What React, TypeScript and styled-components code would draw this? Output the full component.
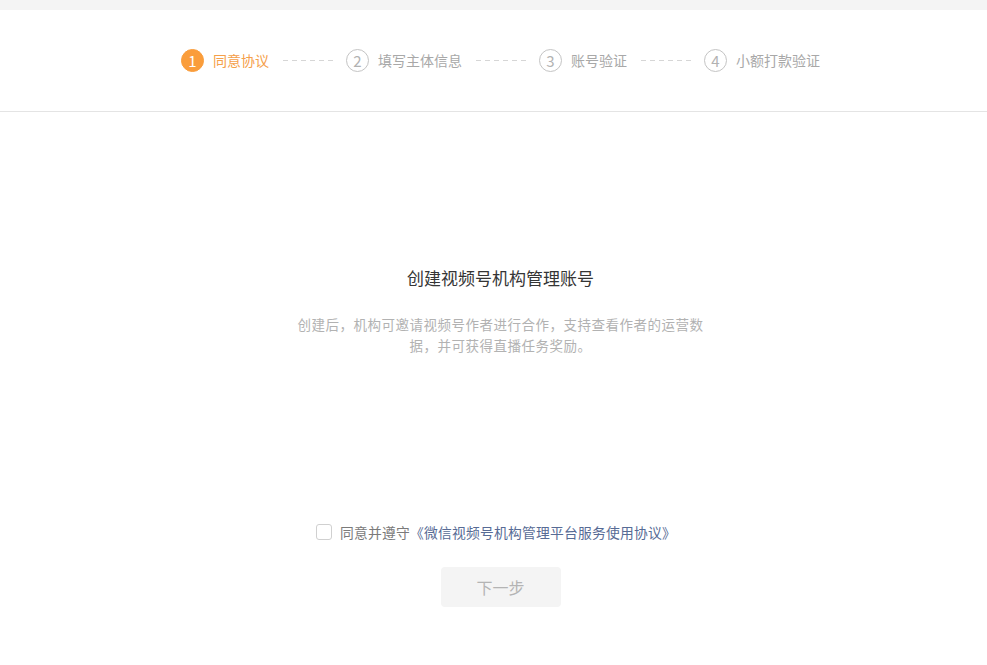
import React from "react";
import styled, { createGlobalStyle } from "styled-components";

const Global = createGlobalStyle`
  html, body { margin: 0; padding: 0; background: #fff; }
  body {
    font-family: "Noto Sans CJK SC", "Noto Sans", sans-serif;
  }
  * { box-sizing: border-box; }
`;

const TopStrip = styled.div`
  height: 10px;
  background: #f4f4f4;
`;

const Header = styled.header`
  height: 102px;
  border-bottom: 1px solid #e4e4e4;
  display: flex;
  align-items: center;
  justify-content: center;
  padding-left: 14px;
  padding-bottom: 1px;
`;

const Steps = styled.div`
  display: flex;
  align-items: center;
`;

const Step = styled.div`
  display: flex;
  align-items: center;
  gap: 9px;
`;

const Circle = styled.span<{ $active?: boolean }>`
  width: 23px;
  height: 23px;
  border-radius: 50%;
  display: flex;
  align-items: center;
  justify-content: center;
  font-size: 15px;
  line-height: 1;
  background: ${(p) => (p.$active ? "#fa9d3b" : "#fff")};
  color: ${(p) => (p.$active ? "#fff" : "#b2b2b2")};
  border: 1px solid ${(p) => (p.$active ? "#fa9d3b" : "#c4c4c4")};
`;

const StepLabel = styled.span<{ $active?: boolean }>`
  font-size: 14px;
  color: ${(p) => (p.$active ? "#f5a04a" : "#a8a8a8")};
`;

const Dash = styled.span`
  width: 54px;
  height: 1px;
  margin: 0 9px 0 14px;
  background: repeating-linear-gradient(
    to right,
    #d6d6d6 0 5px,
    transparent 5px 9px
  );
`;

const Main = styled.main`
  display: flex;
  flex-direction: column;
  align-items: center;
  padding-left: 14px;
  padding-top: 154px;
`;

const Title = styled.h1`
  margin: 0;
  font-size: 17px;
  font-weight: 400;
  line-height: 24px;
  color: #353535;
`;

const Desc = styled.p`
  margin: 24px 0 0;
  width: 414px;
  text-align: center;
  font-size: 13.5px;
  letter-spacing: 0.5px;
  line-height: 21px;
  color: #b2b2b2;
`;

const AgreeRow = styled.label`
  margin-top: 166px;
  margin-right: 9px;
  display: flex;
  align-items: center;
  gap: 8px;
  height: 20px;
  font-size: 13.8px;
  letter-spacing: 0.2px;
  color: #7a7a7a;
  cursor: pointer;
`;

const Box = styled.span`
  width: 16px;
  height: 16px;
  border: 1px solid #d0d0d0;
  border-radius: 3px;
  background: #fff;
`;

const Link = styled.a`
  color: #576b95;
  text-decoration: none;
`;

const NextButton = styled.button`
  margin-top: 25px;
  width: 120px;
  height: 40px;
  border: none;
  border-radius: 4px;
  background: #f4f4f4;
  color: #b4b4b4;
  font-family: inherit;
  font-size: 16px;
`;

const steps = ["同意协议", "填写主体信息", "账号验证", "小额打款验证"];

export default function App() {
  return (
    <>
      <Global />
      <TopStrip />
      <Header>
        <Steps>
          {steps.map((s, i) => (
            <React.Fragment key={s}>
              {i > 0 && <Dash />}
              <Step>
                <Circle $active={i === 0}>{i + 1}</Circle>
                <StepLabel $active={i === 0}>{s}</StepLabel>
              </Step>
            </React.Fragment>
          ))}
        </Steps>
      </Header>
      <Main>
        <Title>创建视频号机构管理账号</Title>
        <Desc>
          创建后，机构可邀请视频号作者进行合作，支持查看作者的运营数据，并可获得直播任务奖励。
        </Desc>
        <AgreeRow>
          <Box />
          <span>
            同意并遵守<Link>《微信视频号机构管理平台服务使用协议》</Link>
          </span>
        </AgreeRow>
        <NextButton disabled>下一步</NextButton>
      </Main>
    </>
  );
}
